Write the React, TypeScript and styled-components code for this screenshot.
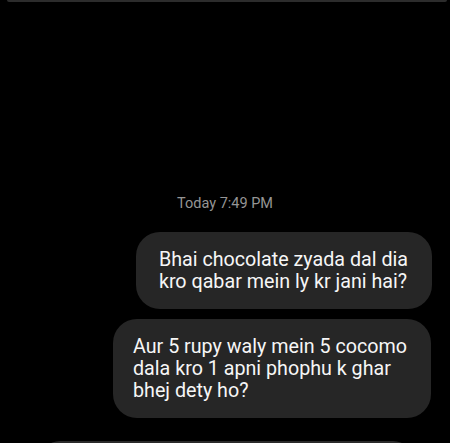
import React from "react";
import styled, { createGlobalStyle } from "styled-components";

const Global = createGlobalStyle`
  html, body { margin: 0; padding: 0; background: #000; }
  body { font-family: Roboto, "Noto Sans", Arial, sans-serif; }
`;

const Screen = styled.div`
  width: 450px;
  height: 443px;
  overflow: hidden;
  background: #000;
  display: flex;
  flex-direction: column;
`;

const TopEdge = styled.div`
  height: 2px;
  margin: 0 3px 0 7px;
  background: #2c2c2c;
  border-radius: 0 0 3px 3px;
  flex-shrink: 0;
`;

const Stamp = styled.div`
  margin-top: 193px;
  text-align: center;
  color: #959595;
  font-size: 14.5px;
  line-height: 17px;
`;

const Thread = styled.div`
  display: flex;
  flex-direction: column;
  align-items: flex-end;
  gap: 10px;
  margin-top: 20px;
`;

const Bubble = styled.div<{ $right: number; $left: number }>`
  margin-right: ${(p) => p.$right}px;
  padding: 17px 24px 16px ${(p) => p.$left}px;
  background: #262626;
  border-radius: 24px;
  color: #f6f6f6;
  font-size: 19.7px;
  line-height: 22px;
  white-space: nowrap;
`;

const NextBubble = styled.div`
  margin: 23px 37px 0 40px;
  height: 40px;
  background: #2a2a2a;
  border-radius: 20px;
  flex-shrink: 0;
`;

export default function App() {
  return (
    <>
      <Global />
      <Screen>
        <TopEdge />
        <Stamp>Today 7:49 PM</Stamp>
        <Thread>
          <Bubble $right={18} $left={23}>
            Bhai chocolate zyada dal dia
            <br />
            kro qabar mein ly kr jani hai?
          </Bubble>
          <Bubble $right={19} $left={20}>
            Aur 5 rupy waly mein 5 cocomo
            <br />
            dala kro 1 apni phophu k ghar
            <br />
            bhej dety ho?
          </Bubble>
        </Thread>
        <NextBubble />
      </Screen>
    </>
  );
}
